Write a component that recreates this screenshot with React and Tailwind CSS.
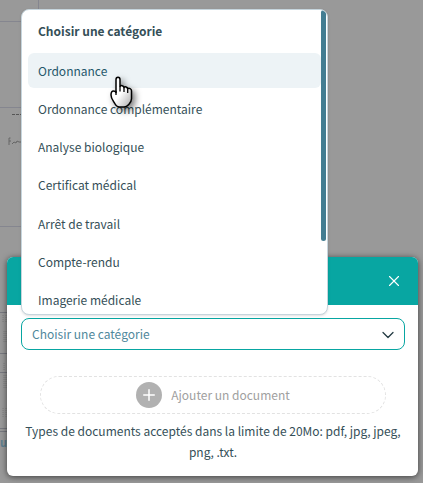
import React, { useState } from 'react';
import { ChevronDown, Plus, X } from 'lucide-react';

const CATEGORIES = [
  'Ordonnance',
  'Ordonnance complémentaire',
  'Analyse biologique',
  'Certificat médical',
  'Arrêt de travail',
  'Compte-rendu',
  'Imagerie médicale',
];

function PageBehind() {
  return (
    <div className="absolute inset-0 overflow-hidden" aria-hidden="true">
      <svg className="absolute left-0 top-0" width="40" height="483" fill="none">
        <path d="M0 21.5H40M38.5 0V21M0 107.5H24M0 226.5H24" stroke="#85868f" />
        <path d="M12 114.5h10" stroke="#555" strokeDasharray="3 1" />
        <path d="M10.500 138h-1.500v7M9 141h2M12 144l2-2 2 1 1-2 2 1h3" stroke="#666" />
        <path d="M0 312.5H8M0 353.5H8M0 372.5H8M0 428.5H8M0 431.5H8" stroke="#77787f" />
        <path d="M3 315v8M6 315v8M4 331v11M6 331v11M4 363v8M4 375v14M6 375v14M3 408v10M6 408v10" stroke="#808080" strokeDasharray="1 1" />
      </svg>
      <span className="absolute left-0 top-[436px] text-[11px] font-bold leading-3 text-[#5d7f90]">ue</span>
    </div>
  );
}

function HandCursor() {
  return (
    <svg
      className="pointer-events-none absolute left-[88px] top-[66px] drop-shadow-[3px_3px_3px_rgba(0,0,0,0.5)]"
      width="24"
      height="34"
      viewBox="0 0 24 34"
      aria-hidden="true"
    >
      <defs>
        <linearGradient id="hand" x1="0" y1="0" x2="1" y2="1">
          <stop offset="0.5" stopColor="#fff" />
          <stop offset="1" stopColor="#aaa" />
        </linearGradient>
      </defs>
      <path
        d="M6 3.500c0-3 4-3 4 0v7c1-1.500 3.500-1 4 1 1-1.200 3.300-.6 3.600 1.200 1.500-1 3.900 0 3.900 2v8c0 3-1.500 4.300-3 6-1.300 1.500-2.500 2.300-4.500 2.300H9.500c-2.500 0-4-2-5-4C3 24.500 1 22.500 1 19c0-2.500 1-4 2.500-4 1.300 0 2 .5 2.500 1.500z"
        fill="url(#hand)"
        stroke="#000"
        strokeWidth="1.500"
        strokeLinejoin="round"
      />
      <path d="M6 15v4M10 10.500v5M14 11.500v4.500M17.700 13v4" stroke="#000" strokeWidth="1.300" />
    </svg>
  );
}

function CategoryList({ selected, onSelect }) {
  return (
    <div className="absolute bottom-full left-0 mb-[3px] h-[306px] w-4/5 overflow-hidden rounded-lg border border-[#c6d5dd] bg-white shadow">
      <div className="px-[6px]">
        <h2 className="h-[43px] px-[10px] text-[12px] font-bold leading-[42px]">Choisir une catégorie</h2>
        <div className="grid h-[268px] grid-rows-7">
          {CATEGORIES.map((name) => (
            <button
              key={name}
              type="button"
              onClick={() => onSelect(name)}
              className={`mb-[3px] rounded-md px-[10px] text-left text-[12px] leading-5 ${
                name === selected ? 'bg-[#edf3f6] text-[#25576b]' : 'hover:bg-[#edf3f6]'
              }`}
            >
              {name}
            </button>
          ))}
        </div>
      </div>
      <div className="absolute right-px top-0 h-[231px] w-[5px] rounded-full bg-[#437d92]" />
      <HandCursor />
    </div>
  );
}

export default function App() {
  const [selected, setSelected] = useState('Ordonnance');

  return (
    <div className="relative flex min-h-screen flex-col justify-end bg-[#999] pb-[7px] pl-[7px] pr-[5px] font-['Noto_Sans_CJK_JP',sans-serif] text-[#354f58]">
      <PageBehind />
      <section role="dialog" aria-label="Ajouter un document" className="relative rounded-md bg-white shadow-[0_1px_6px_rgba(0,0,0,0.6)]">
        <header className="flex h-[48px] items-center justify-end rounded-t-md bg-[#08a6a2] pr-[15px]">
          <button type="button" aria-label="Fermer" className="text-white">
            <X size={18} strokeWidth={1.500} />
          </button>
        </header>

        <div className="pb-[14px] pl-[14px] pr-[13px] pt-[13px]">
          <div className="relative">
            <select
              aria-label="Choisir une catégorie"
              className="block h-8 w-full appearance-none rounded-lg border border-[#08a6a2] bg-white px-[10px] text-[12px] text-[#4f889c] outline-none"
            >
              <option>Choisir une catégorie</option>
            </select>
            <ChevronDown size={20} strokeWidth={1.500} className="pointer-events-none absolute right-[7px] top-[7px] text-[#243b43]" />
            <CategoryList selected={selected} onSelect={setSelected} />
          </div>

          <div className="mt-[26px] px-[19px]">
            <button
              type="button"
              className="flex h-[38px] w-full items-center justify-center gap-[9px] rounded-full border border-dashed border-[#e2e2e2] text-[12px] text-[#a0a0a0]"
            >
              <span className="flex size-[26px] items-center justify-center rounded-full bg-[#b1b1b1] text-white">
                <Plus size={18} strokeWidth={2} />
              </span>
              Ajouter un document
            </button>
          </div>

          <p className="mt-[6px] text-center text-[12px] leading-[21px]">
            Types de documents acceptés dans la limite de 20Mo: pdf, jpg, jpeg, png, .txt.
          </p>
        </div>
      </section>
    </div>
  );
}
